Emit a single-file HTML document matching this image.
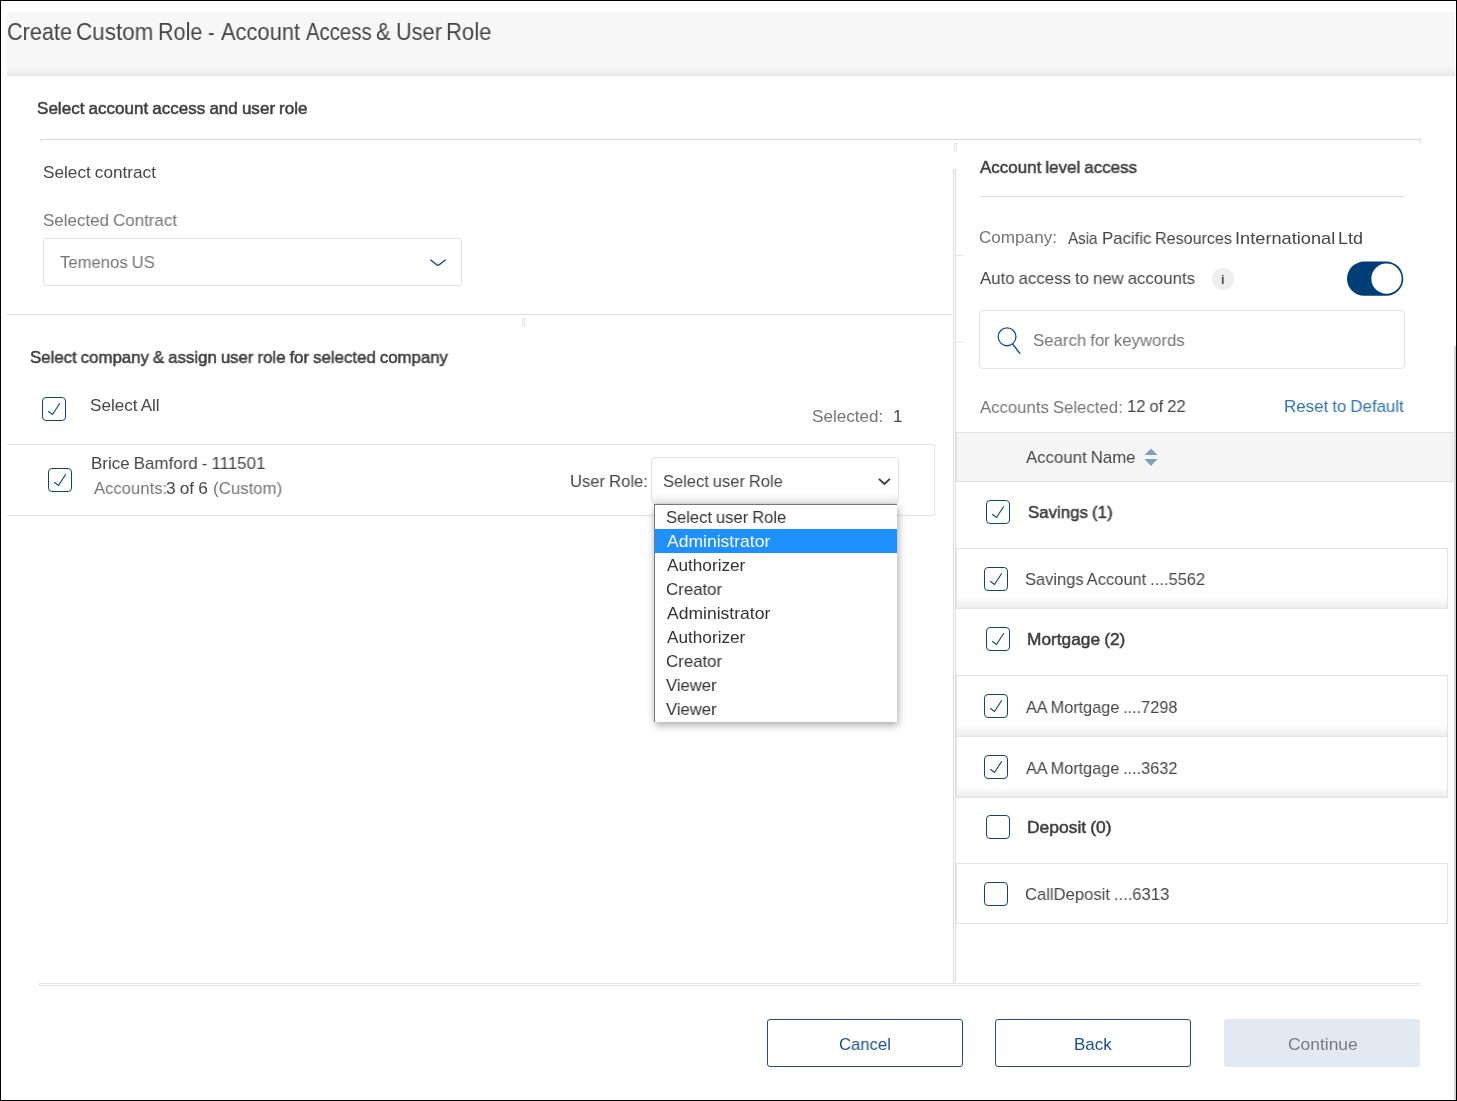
<!DOCTYPE html>
<html lang="en"><head><meta charset="utf-8"><title>Create Custom Role - Account Access &amp; User Role</title>
<style>
html,body{margin:0;padding:0}
body{width:1457px;height:1101px;position:relative;overflow:hidden;background:#fff;font-family:"Liberation Sans",sans-serif}
.frame{position:absolute;left:0;top:0;width:1455px;height:1099px;border:1px solid #000;border-right-width:1px;box-sizing:content-box;pointer-events:none}
.t{position:absolute;white-space:pre;line-height:1;transform-origin:0 0;will-change:transform}
.l{position:absolute;box-sizing:content-box}
.box{position:absolute;border:1px solid #ddd;border-radius:3px;background:#fff;box-sizing:content-box}
.hdr{position:absolute;left:7px;top:12px;width:1448px;height:64px;background:linear-gradient(to bottom,#f7f7f7 0,#f7f7f7 54px,#f1f1f1 59px,#e8e8e8 100%)}
.cb{position:absolute;width:24px;height:24px;border:1px solid #0d477f;border-radius:4px;box-sizing:border-box;background:#fff}
.cb svg{position:absolute;left:-1px;top:-1px}
.sel{border:1px solid #e2e2e2;border-radius:4px;background:linear-gradient(to bottom,#fff 0,#fff 34px,#eee 100%)}
.dd{background:#fff;border-left:1px solid #767676;border-top:1px solid #767676;box-shadow:1px 3px 8px rgba(0,0,0,.35)}
.btn{width:194px;height:46px;border:1.3px solid #1b4f8f;border-radius:3px;background:#fff}
</style></head>
<body>
<div class="hdr"></div>
<div class="l" style="left:40px;top:139px;width:1381px;height:1px;background:#dcdcdc"></div>
<div class="l" style="left:40px;top:140px;width:1px;height:2px;background:#e6e6e6"></div>
<div class="l" style="left:1420px;top:140px;width:1px;height:3px;background:#dcdcdc"></div>
<div class="box" style="left:43px;top:238px;width:417px;height:46px;border-color:#e2e2e2"></div>
<svg class="l" style="left:428px;top:257px" width="20" height="12" viewBox="0 0 20 12"><path d="M2.4 2.8 L8.7 7.7 Q10 8.7 11.3 7.7 L17.6 2.8" fill="none" stroke="#0d477f" stroke-width="1.4"/></svg>
<div class="l" style="left:7px;top:314px;width:945px;height:1px;background:#e0e0e0"></div>
<div class="l" style="left:956px;top:255px;width:7px;height:1px;background:#e3e3e3"></div>
<div class="l" style="left:956px;top:342px;width:7px;height:1px;background:#e3e3e3"></div>
<div class="l" style="left:522px;top:318px;width:1px;height:8px;border:1px solid #e3e3e3;border-bottom:none"></div>
<div class="l" style="left:954px;top:143px;width:1px;height:8px;border:1px solid #e3e3e3;border-bottom:none"></div>
<div class="l" style="left:7px;top:444px;width:927px;height:70px;border:1px solid #e3e3e3;border-left:none;border-radius:0 3px 3px 0"></div>
<div class="cb" style="left:42px;top:397px"><svg viewBox="0 0 24 24" width="24" height="24"><path d="M6.2 14.2 L10.5 17.5 L17.8 6.2" fill="none" stroke="#0d477f" stroke-width="1.15"/></svg></div>
<div class="cb" style="left:48px;top:468px"><svg viewBox="0 0 24 24" width="24" height="24"><path d="M6.2 14.2 L10.5 17.5 L17.8 6.2" fill="none" stroke="#0d477f" stroke-width="1.15"/></svg></div>
<div class="l sel" style="left:651px;top:457px;width:246px;height:45px"></div>
<svg class="l" style="left:876px;top:475px" width="18" height="14" viewBox="0 0 18 14"><path d="M2.9 3.9 L8.4 9.0 L13.9 3.9" fill="none" stroke="#3a3a3a" stroke-width="1.8"/></svg>
<div class="l dd" style="left:654px;top:504px;width:242px;height:217px"></div>
<div class="l" style="left:655px;top:529px;width:242px;height:24px;background:#1e90ff"></div>
<div class="l" style="left:953px;top:169px;width:1px;height:813px;border-left:1px solid #ddd;border-right:1px solid #ddd;border-top:1px solid #ddd"></div>
<div class="l" style="left:980px;top:196px;width:425px;height:1px;background:#ddd"></div>
<div class="l" style="left:1211.5px;top:267.7px;width:22.6px;height:22.6px;border-radius:50%;background:#eee"></div>
<svg class="l" style="left:1346px;top:260px" width="60" height="38" viewBox="0 0 60 38"><rect x="1" y="1.6" width="56.3" height="34.2" rx="17.1" fill="#003e75"/><circle cx="40.5" cy="18.65" r="15.1" fill="#fff"/></svg>
<div class="box" style="left:979px;top:310px;width:424px;height:57px;border-color:#e2e2e2;border-radius:4px"></div>
<svg class="l" style="left:994px;top:325px" width="30" height="32" viewBox="0 0 30 32"><circle cx="13.05" cy="11.85" r="8.9" fill="none" stroke="#14508a" stroke-width="1.3"/><path d="M18.5 18.9 L26.1 28.7" stroke="#14508a" stroke-width="1.4" fill="none"/></svg>
<div class="l" style="left:956px;top:432px;width:495px;height:48px;border:1px solid #e0e0e0;background:#f5f5f5"></div>
<svg class="l" style="left:1143px;top:447px" width="16" height="20" viewBox="0 0 16 20"><path d="M1.5 7.9 L8 1.4 L14.5 7.9 Z M1.5 12.1 L14.5 12.1 L8 19.1 Z" fill="#7f9fbf"/></svg>
<div class="l" style="left:956px;top:548px;width:490px;height:59px;border:1px solid #e3e3e3;background:linear-gradient(to bottom,#fff 0,#fff 48px,#ececec 100%);"></div>
<div class="l" style="left:956px;top:675px;width:490px;height:60px;border:1px solid #e3e3e3;background:linear-gradient(to bottom,#fff 0,#fff 49px,#ececec 100%);"></div>
<div class="l" style="left:956px;top:736px;width:490px;height:60px;border:1px solid #e3e3e3;background:linear-gradient(to bottom,#fff 0,#fff 49px,#ececec 100%);"></div>
<div class="l" style="left:956px;top:863px;width:490px;height:59px;border:1px solid #e3e3e3;background:#fff;"></div>
<div class="cb" style="left:986px;top:500px"><svg viewBox="0 0 24 24" width="24" height="24"><path d="M6.2 14.2 L10.5 17.5 L17.8 6.2" fill="none" stroke="#0d477f" stroke-width="1.15"/></svg></div>
<div class="cb" style="left:984px;top:567px"><svg viewBox="0 0 24 24" width="24" height="24"><path d="M6.2 14.2 L10.5 17.5 L17.8 6.2" fill="none" stroke="#0d477f" stroke-width="1.15"/></svg></div>
<div class="cb" style="left:986px;top:627px"><svg viewBox="0 0 24 24" width="24" height="24"><path d="M6.2 14.2 L10.5 17.5 L17.8 6.2" fill="none" stroke="#0d477f" stroke-width="1.15"/></svg></div>
<div class="cb" style="left:984px;top:694px"><svg viewBox="0 0 24 24" width="24" height="24"><path d="M6.2 14.2 L10.5 17.5 L17.8 6.2" fill="none" stroke="#0d477f" stroke-width="1.15"/></svg></div>
<div class="cb" style="left:984px;top:755px"><svg viewBox="0 0 24 24" width="24" height="24"><path d="M6.2 14.2 L10.5 17.5 L17.8 6.2" fill="none" stroke="#0d477f" stroke-width="1.15"/></svg></div>
<div class="cb" style="left:986px;top:815px"></div>
<div class="cb" style="left:984px;top:882px"></div>
<div class="l" style="left:1454px;top:346px;width:2px;height:754px;background:#d4d4d4"></div>
<div class="l" style="left:39px;top:983px;width:1379px;height:1px;border:1px solid #e3e3e3"></div>
<div class="l btn" style="left:767px;top:1019px"></div>
<div class="l btn" style="left:995px;top:1019px"></div>
<div class="l" style="left:1224px;top:1019px;width:196px;height:48px;border-radius:3px;background:#e3e9f2"></div>
<span class="t" style="left:6.72px;top:21.00px;font-size:23px;word-spacing:-0.92px;color:#464646;transform:scaleX(0.9423)">Create </span>
<span class="t" style="left:76.08px;top:21.00px;font-size:23px;word-spacing:-0.92px;color:#464646;transform:scaleX(0.9765)">Custom </span>
<span class="t" style="left:158.22px;top:21.00px;font-size:23px;word-spacing:-0.92px;color:#464646;transform:scaleX(0.9379)">Role </span>
<span class="t" style="left:208.23px;top:21.00px;font-size:23px;word-spacing:-0.92px;color:#464646;transform:scaleX(0.8696)">- </span>
<span class="t" style="left:220.70px;top:21.00px;font-size:23px;word-spacing:-0.92px;color:#464646;transform:scaleX(0.9506)">Account </span>
<span class="t" style="left:306.30px;top:21.00px;font-size:23px;word-spacing:-0.92px;color:#464646;transform:scaleX(0.8846)">Access </span>
<span class="t" style="left:376.09px;top:21.00px;font-size:23px;word-spacing:-0.92px;color:#464646;transform:scaleX(0.9474)">&amp; </span>
<span class="t" style="left:395.54px;top:21.00px;font-size:23px;word-spacing:-0.92px;color:#464646;transform:scaleX(0.9462)">User </span>
<span class="t" style="left:445.98px;top:21.00px;font-size:23px;word-spacing:-0.92px;color:#464646;transform:scaleX(0.9605)">Role </span>
<span class="t" style="left:36.90px;top:100.00px;font-size:17px;word-spacing:-0.68px;color:#3e3e3e;transform:scaleX(1.0032);-webkit-text-stroke:0.5px #3e3e3e">Select account access and user role </span>
<span class="t" style="left:42.64px;top:164.00px;font-size:17px;word-spacing:-0.68px;color:#464646;transform:scaleX(1.0108)">Select contract </span>
<span class="t" style="left:42.65px;top:212.00px;font-size:17px;word-spacing:-0.68px;color:#757575;transform:scaleX(0.9963)">Selected Contract </span>
<span class="t" style="left:60.41px;top:254.00px;font-size:17px;word-spacing:-0.68px;color:#757575;transform:scaleX(0.9816)">Temenos US </span>
<span class="t" style="left:29.71px;top:349.00px;font-size:17px;word-spacing:-0.68px;color:#3e3e3e;transform:scaleX(0.9889);-webkit-text-stroke:0.5px #3e3e3e">Select company &amp; assign user role for selected company </span>
<span class="t" style="left:89.75px;top:397.00px;font-size:17px;word-spacing:-0.68px;color:#464646;transform:scaleX(1.0059)">Select All </span>
<span class="t" style="left:811.75px;top:408.00px;font-size:17px;word-spacing:-0.68px;color:#757575;transform:scaleX(1.0044)">Selected: </span>
<span class="t" style="left:893.38px;top:408.00px;font-size:17px;word-spacing:-0.68px;color:#464646;transform:scaleX(0.9793)">1 </span>
<span class="t" style="left:90.50px;top:455.00px;font-size:17px;word-spacing:-0.68px;color:#464646;transform:scaleX(0.9971)">Brice Bamford - 111501 </span>
<span class="t" style="left:94.00px;top:480.00px;font-size:17px;word-spacing:-0.68px;color:#757575;transform:scaleX(0.9795)">Accounts: </span>
<span class="t" style="left:166.24px;top:480.00px;font-size:17px;word-spacing:-0.68px;color:#464646;transform:scaleX(1.0164)">3 of 6 </span>
<span class="t" style="left:212.71px;top:480.00px;font-size:17px;word-spacing:-0.68px;color:#757575;transform:scaleX(0.9904)">(Custom) </span>
<span class="t" style="left:569.78px;top:473.00px;font-size:17px;word-spacing:-0.68px;color:#464646;transform:scaleX(0.9772)">User Role: </span>
<span class="t" style="left:663.07px;top:473.00px;font-size:17px;word-spacing:-0.68px;color:#464646;transform:scaleX(0.9705)">Select user Role </span>
<span class="t" style="left:665.87px;top:509.00px;font-size:17px;word-spacing:-0.68px;color:#333;transform:scaleX(0.9738)">Select user Role </span>
<span class="t" style="left:666.60px;top:533.00px;font-size:17px;word-spacing:-0.68px;color:#fff;transform:scaleX(1.0310)">Administrator </span>
<span class="t" style="left:666.60px;top:557.00px;font-size:17px;word-spacing:-0.68px;color:#333;transform:scaleX(1.0110)">Authorizer </span>
<span class="t" style="left:665.86px;top:581.00px;font-size:17px;word-spacing:-0.68px;color:#333;transform:scaleX(0.9901)">Creator </span>
<span class="t" style="left:666.60px;top:605.00px;font-size:17px;word-spacing:-0.68px;color:#333;transform:scaleX(1.0310)">Administrator </span>
<span class="t" style="left:666.60px;top:629.00px;font-size:17px;word-spacing:-0.68px;color:#333;transform:scaleX(1.0110)">Authorizer </span>
<span class="t" style="left:665.86px;top:653.00px;font-size:17px;word-spacing:-0.68px;color:#333;transform:scaleX(0.9901)">Creator </span>
<span class="t" style="left:666.36px;top:677.00px;font-size:17px;word-spacing:-0.68px;color:#333;transform:scaleX(0.9795)">Viewer </span>
<span class="t" style="left:666.36px;top:701.00px;font-size:17px;word-spacing:-0.68px;color:#333;transform:scaleX(0.9795)">Viewer </span>
<span class="t" style="left:980.45px;top:159.00px;font-size:17px;word-spacing:-0.68px;color:#3e3e3e;transform:scaleX(0.9971);-webkit-text-stroke:0.5px #3e3e3e">Account level access </span>
<span class="t" style="left:979.45px;top:229.00px;font-size:17px;word-spacing:-0.68px;color:#757575;transform:scaleX(1.0060)">Company: </span>
<span class="t" style="left:1067.80px;top:230.00px;font-size:17px;word-spacing:-0.68px;color:#464646;transform:scaleX(0.8909)">Asia </span>
<span class="t" style="left:1101.82px;top:230.00px;font-size:17px;word-spacing:-0.68px;color:#464646;transform:scaleX(0.9875)">Pacific </span>
<span class="t" style="left:1155.38px;top:230.00px;font-size:17px;word-spacing:-0.68px;color:#464646;transform:scaleX(0.9468)">Resources </span>
<span class="t" style="left:1235.29px;top:230.00px;font-size:17px;word-spacing:-0.68px;color:#464646;transform:scaleX(1.0714)">International </span>
<span class="t" style="left:1338.41px;top:230.00px;font-size:17px;word-spacing:-0.68px;color:#464646;transform:scaleX(1.0571)">Ltd </span>
<span class="t" style="left:980.20px;top:270.00px;font-size:17px;word-spacing:-0.68px;color:#464646;transform:scaleX(0.9887)">Auto access to new accounts </span>
<span class="t" style="left:1221.45px;top:274.00px;font-size:12.5px;word-spacing:-0.50px;color:#4a4a4a;transform:scaleX(1.0000);font-weight:700">i </span>
<span class="t" style="left:1032.56px;top:332.00px;font-size:17px;word-spacing:-0.68px;color:#757575;transform:scaleX(0.9878)">Search for keywords </span>
<span class="t" style="left:980.20px;top:399.00px;font-size:17px;word-spacing:-0.68px;color:#757575;transform:scaleX(0.9850)">Accounts Selected: </span>
<span class="t" style="left:1126.88px;top:398.00px;font-size:17px;word-spacing:-0.68px;color:#464646;transform:scaleX(0.9741)">12 of 22 </span>
<span class="t" style="left:1284.11px;top:398.00px;font-size:17px;word-spacing:-0.68px;color:#2f74b5;transform:scaleX(0.9941)">Reset to Default </span>
<span class="t" style="left:1026.20px;top:449.00px;font-size:17px;word-spacing:-0.68px;color:#464646;transform:scaleX(0.9882)">Account Name </span>
<span class="t" style="left:1027.80px;top:504.00px;font-size:17px;word-spacing:-0.68px;color:#3e3e3e;transform:scaleX(0.9917);-webkit-text-stroke:0.5px #3e3e3e">Savings (1) </span>
<span class="t" style="left:1025.27px;top:571.00px;font-size:17px;word-spacing:-0.68px;color:#464646;transform:scaleX(0.9699)">Savings Account ....5562 </span>
<span class="t" style="left:1027.03px;top:631.00px;font-size:17px;word-spacing:-0.68px;color:#3e3e3e;transform:scaleX(1.0169);-webkit-text-stroke:0.5px #3e3e3e">Mortgage (2) </span>
<span class="t" style="left:1025.50px;top:699.00px;font-size:17px;word-spacing:-0.68px;color:#464646;transform:scaleX(0.9556)">AA Mortgage ....7298 </span>
<span class="t" style="left:1025.50px;top:760.00px;font-size:17px;word-spacing:-0.68px;color:#464646;transform:scaleX(0.9556)">AA Mortgage ....3632 </span>
<span class="t" style="left:1027.12px;top:819.00px;font-size:17px;word-spacing:-0.68px;color:#3e3e3e;transform:scaleX(1.0261);-webkit-text-stroke:0.5px #3e3e3e">Deposit (0) </span>
<span class="t" style="left:1024.77px;top:886.00px;font-size:17px;word-spacing:-0.68px;color:#464646;transform:scaleX(0.9771)">CallDeposit ....6313 </span>
<span class="t" style="left:839.27px;top:1036.00px;font-size:17px;word-spacing:-0.68px;color:#1b4f8f;transform:scaleX(0.9784)">Cancel </span>
<span class="t" style="left:1074.10px;top:1036.00px;font-size:17px;word-spacing:-0.68px;color:#1b4f8f;transform:scaleX(1.0014)">Back </span>
<span class="t" style="left:1287.73px;top:1036.00px;font-size:17px;word-spacing:-0.68px;color:#7a7a7a;transform:scaleX(1.0241)">Continue </span>
<div class="frame"></div>
</body></html>
